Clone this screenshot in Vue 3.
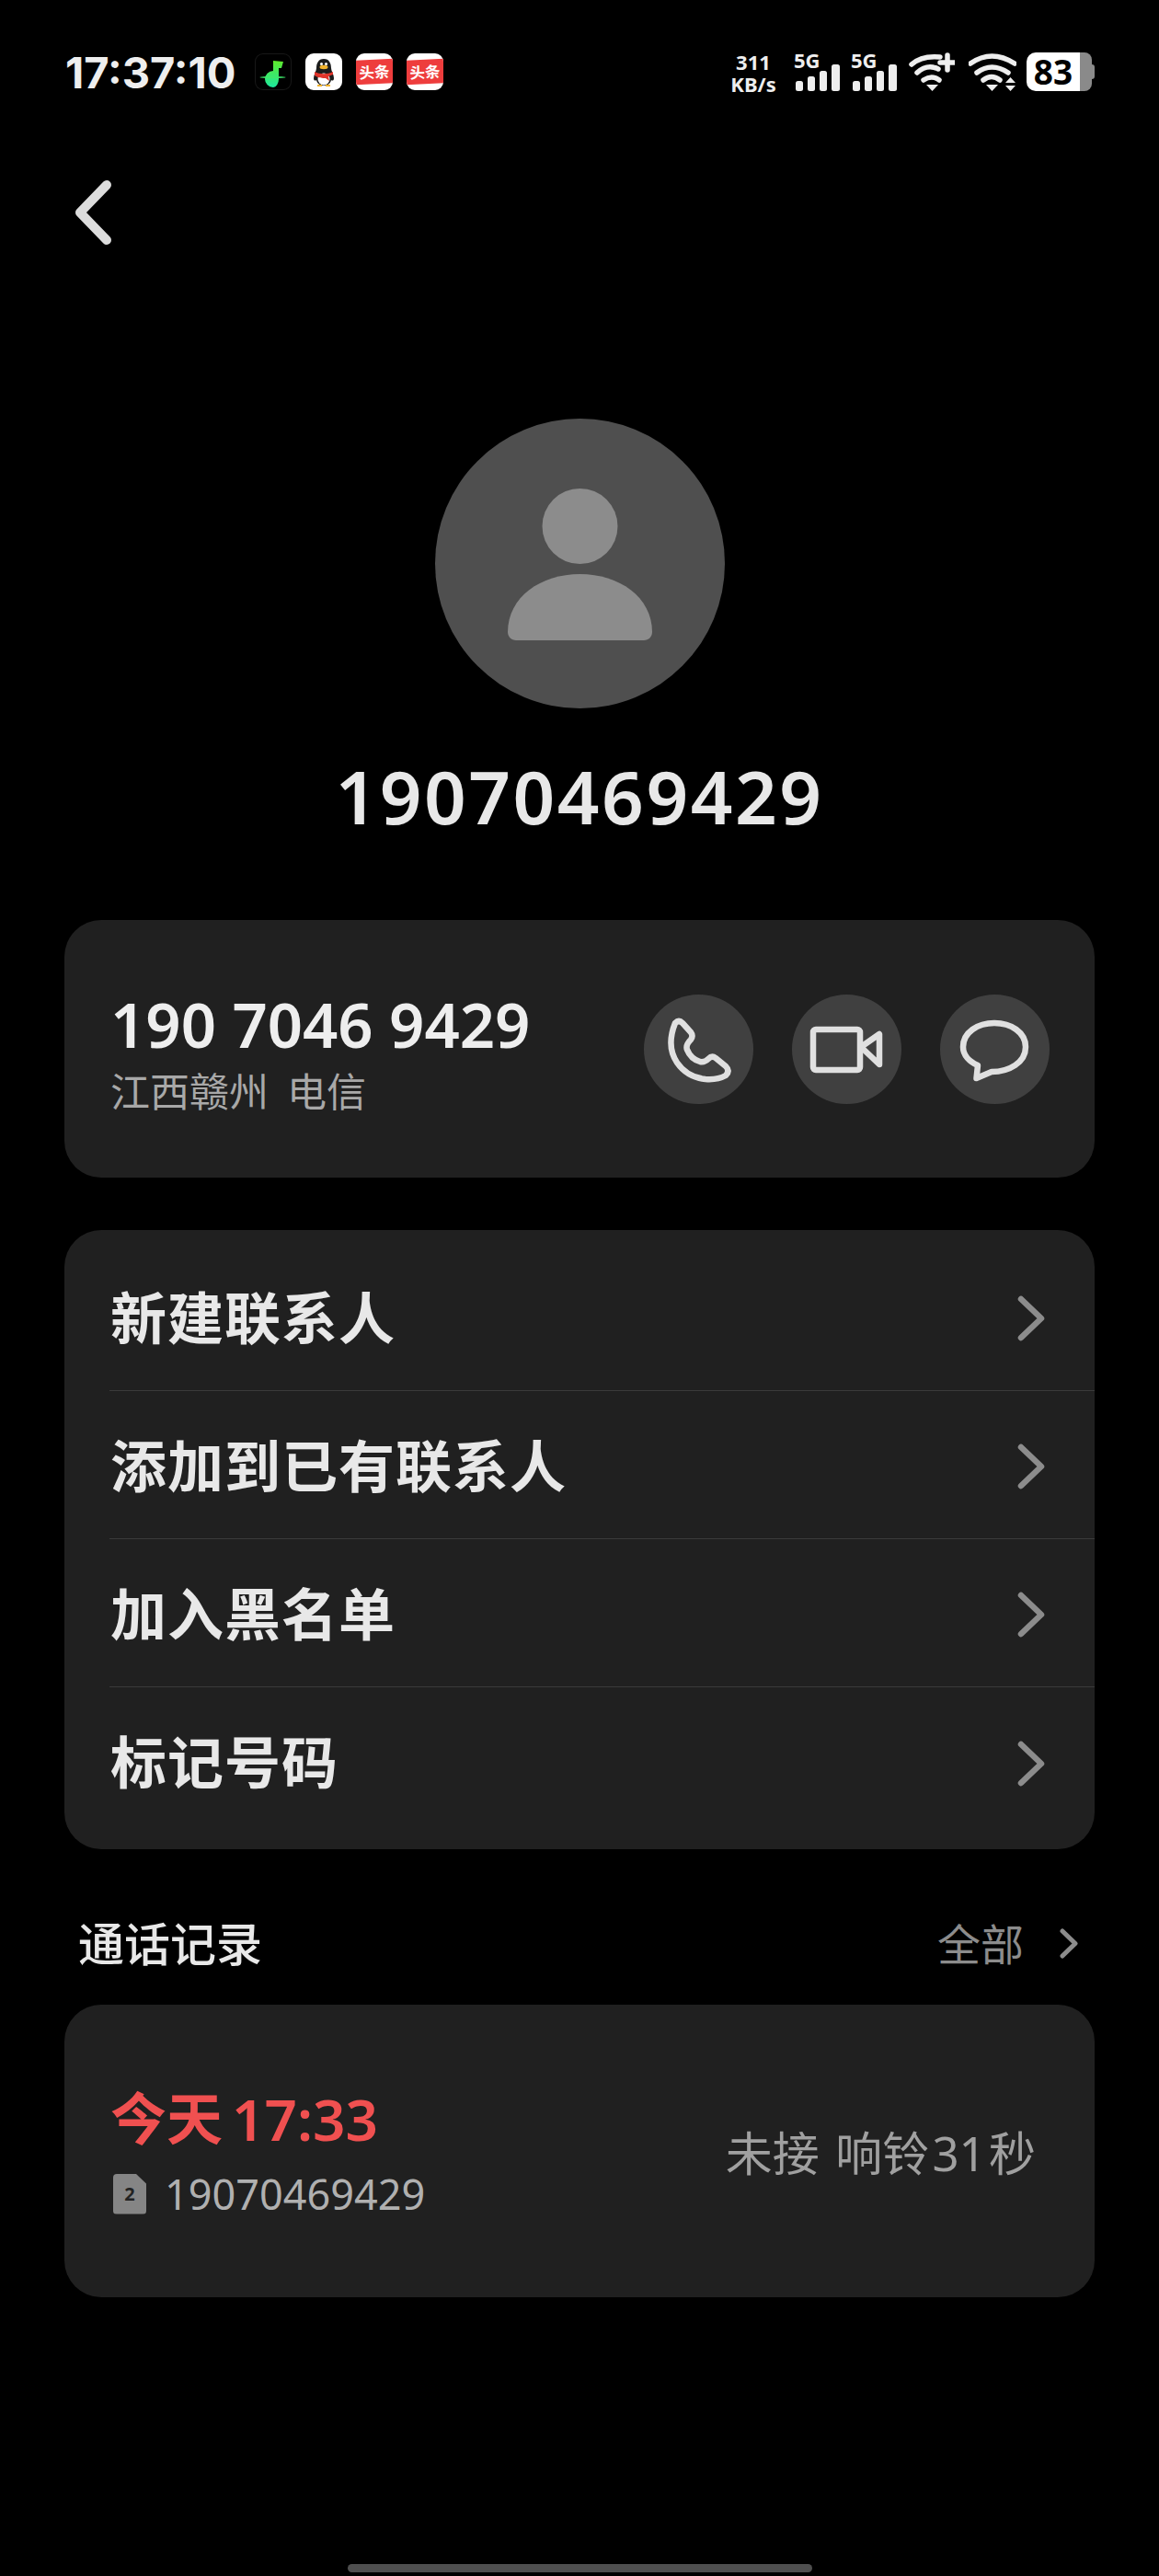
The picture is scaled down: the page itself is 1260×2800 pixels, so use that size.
<template>
  <div class="page">
    <header class="status">
      <div class="status-left">
        <span class="clock">17:37:10</span>
        <span class="app app-music">
          <svg width="40" height="41" viewBox="0 0 40 41">
            <defs>
              <linearGradient id="note" x1="0" y1="0" x2="0" y2="1">
                <stop offset="0" stop-color="#5fe82a" />
                <stop offset="1" stop-color="#1de9a0" />
              </linearGradient>
            </defs>
            <path d="M20 8 31 9l-2 7h-3v12a6 9 0 0 1-6 9 9 9 0 1 1 0-18z" fill="url(#note)" />
            <ellipse cx="19.500" cy="26" rx="14" ry="1" fill="#3fe86a" />
          </svg>
        </span>
        <span class="app app-qq">
          <svg width="40" height="40" viewBox="0 0 40 40">
            <path d="M20 6c-6 0-8 5-8 10 0 3-3 7-3 11 0 3 2 3 3 2 1 4 4 6 8 6s7-2 8-6c1 1 3 1 3-2 0-4-3-8-3-11 0-5-2-10-8-10z" fill="#1c1c1c" />
            <ellipse cx="20" cy="28" rx="6.500" ry="6.500" fill="#fff" />
            <ellipse cx="20" cy="15" rx="4.500" ry="2.200" fill="#f2b32d" />
            <circle cx="17.500" cy="11.500" r="1.500" fill="#fff" />
            <circle cx="22.500" cy="11.500" r="1.500" fill="#fff" />
            <path d="M10 20c6 3 14 3 20 0v3l-5 2 1 5-4-3c-3 0-8 0-12-3z" fill="#e0352b" />
            <path d="M13 35h5M22 35h5" stroke="#f2b32d" stroke-width="2" />
          </svg>
        </span>
        <span v-for="n in 2" :key="n" class="app app-news"><b>头条</b></span>
      </div>
      <div class="status-right">
        <div class="speed">311<br />KB/s</div>
        <div v-for="n in 2" :key="n" class="sim">
          <span class="sim-label">5G</span>
          <svg width="48" height="29" viewBox="0 0 48 29">
            <rect x="0" y="18" width="8" height="11" rx="2.500" />
            <rect x="13" y="13" width="8" height="16" rx="2.500" />
            <rect x="26" y="7" width="8" height="22" rx="2.500" />
            <rect x="39" y="0" width="9" height="29" rx="2.500" />
          </svg>
        </div>
        <svg class="wifi" width="50" height="42" viewBox="0 0 50 42">
          <path d="M3 13Q14 3 34 5" />
          <path d="M9 22Q20 12 32 18" />
          <path d="M16 30Q25 24 33 30" />
          <path class="fill" d="M19 35h13l-6.500 7z" />
          <path d="M34 11h16M42 3v16" />
        </svg>
        <svg class="wifi" width="52" height="42" viewBox="0 0 52 42">
          <path d="M2 12Q25-4 50 12" />
          <path d="M9 22Q25 10 43 22" />
          <path d="M16 30Q25 23 34 30" />
          <path class="fill" d="M19 35h13l-6.500 7zM40 33h11l-5.500-6zM40 36h11l-5.500 6z" />
        </svg>
        <div class="battery">
          <span class="battery-level">83</span>
          <span class="battery-rest"></span>
        </div>
      </div>
    </header>

    <nav class="topbar">
      <svg width="46" height="74" viewBox="0 0 46 74">
        <path d="M36 5 7 35l29 30" />
      </svg>
    </nav>

    <div class="avatar">
      <svg width="315" height="315" viewBox="0 0 315 315">
        <circle cx="157.500" cy="117" r="41" />
        <path d="M79 232c0-38 36-63 78.500-63S236 194 236 232c0 5-4 9-9 9H88c-5 0-9-4-9-9z" />
      </svg>
    </div>
    <h1 class="name">19070469429</h1>

    <section class="card number-card">
      <div class="number-info">
        <div class="number">190 7046 9429</div>
        <div class="location"><span>江西赣州</span><span>电信</span></div>
      </div>
      <div class="actions">
        <button class="action">
          <svg width="119" height="119" viewBox="0 0 119 119">
            <path d="M34 31q4-4 8 0l9 10q3 4 0 8-6 6-4 11 4 10 14 13 5 1 9-3 4-4 8-1l11 9q5 5 0 10-9 5-22 4-20-2-31-18-12-18-2-43z" />
          </svg>
        </button>
        <button class="action">
          <svg width="119" height="119" viewBox="0 0 119 119">
            <rect x="23" y="38" width="51" height="44" rx="3" />
            <path d="M75 57 95 43v33z" />
          </svg>
        </button>
        <button class="action">
          <svg width="119" height="119" viewBox="0 0 119 119">
            <path d="M56 84C75 84 93 74 93 57 93 41 77 31 59 31 41 31 25 41 25 57c0 9 7 16 16 20l-1.500 14z" />
          </svg>
        </button>
      </div>
    </section>

    <section class="card menu-card">
      <div v-for="item in menu" :key="item" class="menu-row">
        <span>{{ item }}</span>
        <svg width="30" height="50" viewBox="0 0 30 50">
          <path d="M4 4 26 25 4 46" />
        </svg>
      </div>
    </section>

    <div class="section-head">
      <span class="section-title">通话记录</span>
      <span class="section-all">
        全部
        <svg width="20" height="33" viewBox="0 0 20 33">
          <path d="M3 3 17 16.500 3 30" />
        </svg>
      </span>
    </div>

    <section class="card log-card">
      <div>
        <div class="log-time"><span>今天</span><span>17:33</span></div>
        <div class="log-sub">
          <span class="sim-badge">2</span>
          <span>19070469429</span>
        </div>
      </div>
      <div class="log-state"><span class="log-missed">未接</span> 响铃 31 秒</div>
    </section>

    <div class="home-bar"></div>
  </div>
</template>

<script setup>
const menu = ['新建联系人', '添加到已有联系人', '加入黑名单', '标记号码']
</script>

<style>
html, body { background: #000; }
</style>

<style scoped>
.page {
  width: 1260px;
  height: 2800px;
  background: #000;
  color: #e8e8e8;
  font-family: "Noto Sans", "Noto Sans CJK SC", sans-serif;
  display: flex;
  flex-direction: column;
  overflow: hidden;
}

.status {
  height: 42px;
  margin-top: 57px;
  padding: 0 70px 0 71px;
  display: flex;
  justify-content: space-between;
  align-items: center;
}
.status-left, .status-right { display: flex; align-items: center; }
.clock { font-family: Inter, sans-serif; font-size: 47px; font-weight: 700; width: 186px; white-space: nowrap; color: #eee; }
.app {
  width: 40px; height: 40px;
  border-radius: 9px;
  margin-left: 15px;
  overflow: hidden;
  display: flex; align-items: center; justify-content: center;
  background: #fff;
}
.app-music { background: #000; margin-left: 20px; box-shadow: inset 0 0 0 1px #181818; }
.app-news b {
  width: 100%;
  background: #ee3d3d;
  color: #fff;
  font-size: 15px;
  line-height: 24px;
  text-align: center;
  white-space: nowrap;
  transform: rotate(-3deg) scale(1.1);
}
.speed {
  margin-top: 1px;
  width: 50px;
  font-size: 22px;
  font-weight: 700;
  line-height: 24px;
  text-align: center;
  color: #eee;
}
.sim { position: relative; width: 48px; height: 42px; margin-left: 21px; display: flex; align-items: flex-end; }
.sim svg { fill: #eee; display: block; }
.sim-label { position: absolute; left: -2px; top: -3px; font-size: 22px; font-weight: 700; line-height: 22px; color: #eee; }
.sim + .sim { margin-left: 14px; }
.wifi { fill: none; stroke: #eee; stroke-width: 5.500; stroke-linecap: round; margin-left: 13px; }
.wifi + .wifi { margin-left: 15px; }
.wifi .fill { fill: #eee; stroke: none; }
.battery { display: flex; position: relative; height: 42px; margin-left: 11px; padding-right: 3px; }
.battery-level {
  width: 58px;
  background: #fff;
  color: #000;
  border-radius: 10px 0 0 10px;
  font-size: 37px;
  font-weight: 700;
  line-height: 42px;
  text-align: center;
}
.battery-rest { width: 13px; height: 42px; background: #8a8a8a; border-radius: 0 8px 8px 0; }
.battery-rest::after {
  content: "";
  position: absolute;
  right: 0; top: 13px;
  width: 3px; height: 16px;
  background: #8a8a8a;
  border-radius: 0 3px 3px 0;
}

.topbar { height: 74px; margin-top: 97px; padding-left: 80px; }
.topbar svg { display: block; fill: none; stroke: #dcdcdc; stroke-width: 10; stroke-linecap: round; stroke-linejoin: round; }

.avatar {
  width: 315px; height: 315px;
  margin: 185px auto 0;
  border-radius: 50%;
  background: #4f4f4f;
}
.avatar svg { display: block; fill: #8c8c8c; }
.name {
  margin: 45px 0 0;
  font-size: 80px;
  font-weight: 600;
  letter-spacing: 2.500px;
  line-height: 100px;
  text-align: center;
  color: #e8e8e8;
}

.card {
  margin: 0 70px;
  background: #202020;
  border-radius: 40px;
}
.number-card {
  height: 280px;
  margin-top: 85px;
  padding: 0 49px 0 50px;
  display: flex;
  justify-content: space-between;
  align-items: center;
}
.number-info { margin-top: 6px; }
.number { font-size: 67px; font-weight: 600; line-height: 80px; color: #eee; white-space: nowrap; }
.location { display: flex; gap: 20px; margin-top: 7px; font-size: 43px; line-height: 54px; color: #a8a8a8; }
.actions { display: flex; gap: 42px; }
.action {
  width: 119px; height: 119px;
  padding: 0;
  border: none;
  border-radius: 50%;
  background: #404040;
}
.action svg { display: block; fill: none; stroke: #e0e0e0; stroke-width: 6.500; stroke-linejoin: round; }

.menu-card { margin-top: 57px; padding: 14px 0 15px; }
.menu-row {
  height: 161px;
  box-sizing: border-box;
  margin-left: 49px;
  padding: 0 54px 0 1px;
  border-bottom: 1px solid #3a3a3a;
  display: flex;
  justify-content: space-between;
  align-items: center;
  font-size: 61px;
  font-weight: 700;
  letter-spacing: 1px;
  color: #e8e8e8;
}
.menu-row span { margin-bottom: 4px; }
.menu-row svg { margin-top: 4px; }
.menu-row:last-child { border-bottom: none; }
.menu-row svg { fill: none; stroke: #8c8c8c; stroke-width: 6.500; stroke-linecap: round; stroke-linejoin: round; }

.section-head {
  height: 60px;
  margin: 70px 0 0;
  padding: 0 88px 0 85px;
  display: flex;
  justify-content: space-between;
  align-items: center;
}
.section-title { font-size: 50px; font-weight: 500; color: #e8e8e8; }
.section-all { display: flex; align-items: center; gap: 39px; font-size: 47px; color: #8c8c8c; }
.section-all svg { fill: none; stroke: #8c8c8c; stroke-width: 5; stroke-linecap: round; stroke-linejoin: round; margin-top: 4px; }

.log-card {
  height: 318px;
  margin-top: 39px;
  padding: 0 64px 0 50px;
  display: flex;
  justify-content: space-between;
  align-items: center;
}
.log-time { display: flex; gap: 10px; font-size: 61px; font-weight: 600; line-height: 78px; color: #f05050; }
.log-time span + span { font-size: 62px; }
.log-sub { display: flex; align-items: center; gap: 20px; margin-top: 15px; font-size: 45px; line-height: 56px; color: #b0b0b0; }
.sim-badge {
  width: 36px; height: 44px;
  margin-left: 3px;
  background: #858585;
  border-radius: 4px;
  clip-path: polygon(0 0, 68% 0, 100% 25%, 100% 100%, 0 100%);
  color: #222;
  font-size: 20px;
  font-weight: 700;
  line-height: 44px;
  text-align: center;
}
.log-state { font-size: 51px; word-spacing: -10px; color: #a0a0a0; white-space: nowrap; }
.log-missed { margin-right: 14px; }

.home-bar {
  width: 505px; height: 9px;
  margin: auto auto 4px;
  border-radius: 5px;
  background: #4f4f4f;
}
</style>
